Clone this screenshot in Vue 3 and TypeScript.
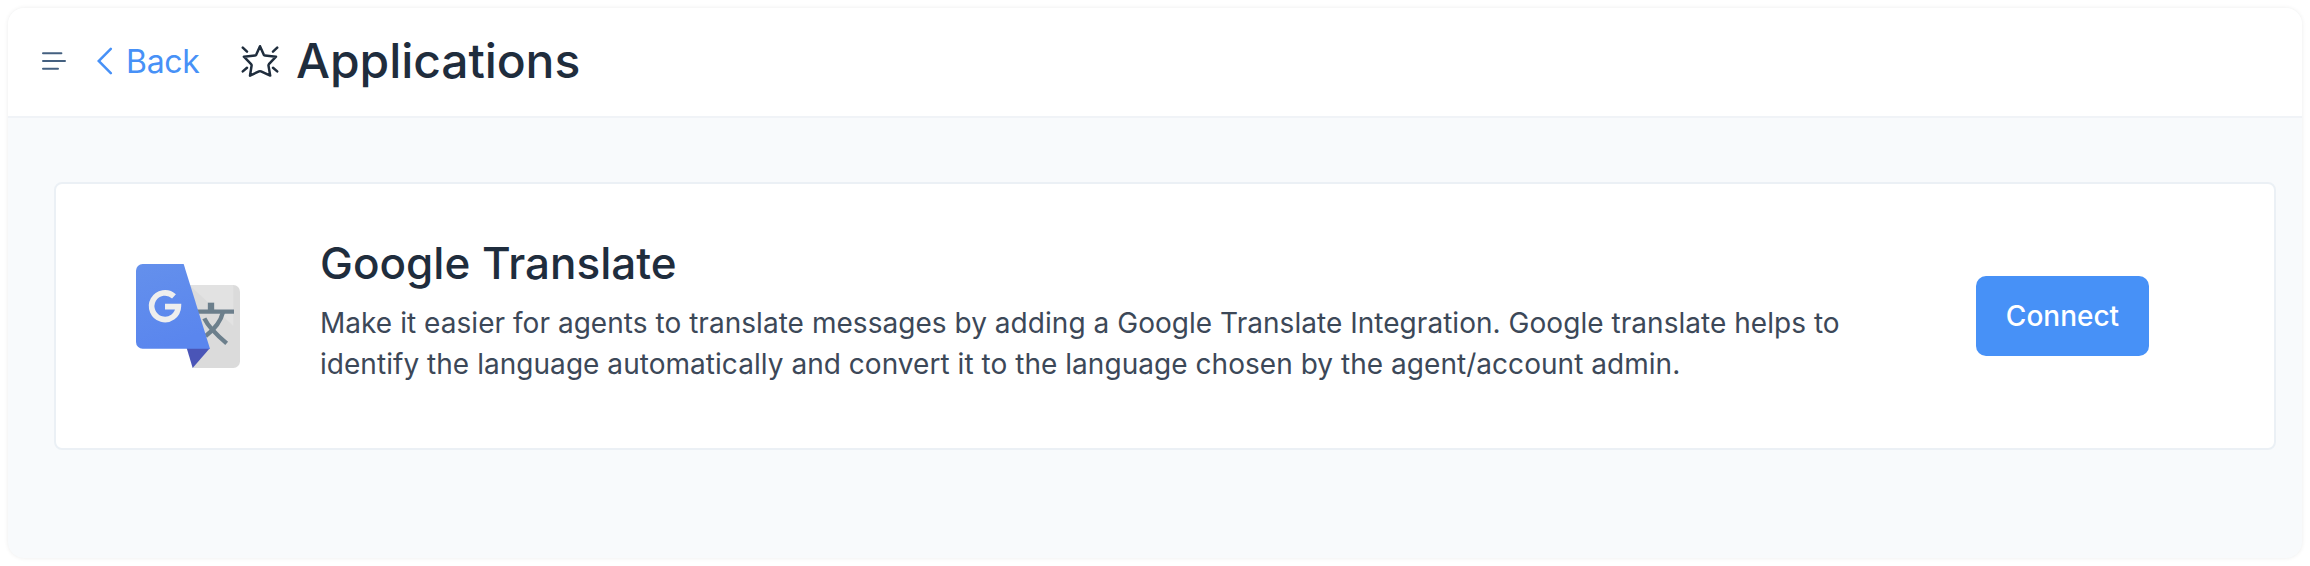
<script setup lang="ts">
interface Integration {
  name: string
  lines: string[]
  action: string
}

const title: string = 'Applications'
const integration: Integration = {
  name: 'Google Translate',
  lines: [
    'Make it easier for agents to translate messages by adding a Google Translate Integration. Google translate helps to',
    'identify the language automatically and convert it to the language chosen by the agent/account admin.',
  ],
  action: 'Connect',
}
</script>

<template>
  <div class="page">
    <main class="window">
      <header class="topbar">
        <svg class="menu" width="24" height="20" viewBox="0 0 24 20">
          <path d="M1 2.2H19.4M1 10H23M1 17.700H16" />
        </svg>
        <a class="back">
          <svg width="16" height="28" viewBox="0 0 16 28"><path d="M13.8 1.8 1.7 14 13.8 26.2" /></svg>
          <span>Back</span>
        </a>
        <svg class="star" width="38" height="34" viewBox="0 0 38 34">
          <path d="M19 2.2 22.7 10.6Q23.1 11.4 24 11.6L35 12.7 27.9 20.2Q27.4 20.8 27.5 21.6L29.2 31.6 20 27.4Q19 27 18 27.4L9 31.6 10.6 21.6Q10.7 20.8 10.1 20.2L2.9 12.7 14 11.6Q14.9 11.4 15.3 10.6Z" />
          <path d="M1.8 3.7 6 7.6M36.2 3.7 32 7.6M1.8 27.4 6 23.8M36.2 27.4 32 23.8" />
        </svg>
        <h1>{{ title }}</h1>
      </header>
      <section class="content">
        <article class="card">
          <svg class="logo" width="104" height="104" viewBox="0 0 312 312">
            <defs>
              <linearGradient id="blue" x1="0" y1="0" x2="0.3" y2="1">
                <stop offset="0" stop-color="#6490ec" />
                <stop offset="1" stop-color="#5a86ee" />
              </linearGradient>
            </defs>
            <path d="M150 63H292a20 20 0 0 1 20 20V292a20 20 0 0 1-20 20H170Z" fill="#dbdbdb" />
            <path d="M160 63 292 186V63Z" fill="#e2e2e2" />
            <g fill="none" stroke="#6c7f8c" stroke-width="13">
              <path d="M180 143H294" />
              <path d="M225 116V143" stroke-width="19" />
              <path d="M261 144Q252 183 209 216" />
              <path d="M205 163Q219 193 272 238" />
            </g>
            <path d="M152 252H222L170 312Z" fill="#4a55b7" />
            <path d="M20 0H143L222 254H20A20 20 0 0 1 0 234V20A20 20 0 0 1 20 0Z" fill="url(#blue)" />
            <path d="M114 97A40 40 0 1 0 127 128H87" fill="none" stroke="#eee" stroke-width="17" />
          </svg>
          <div class="info">
            <h2>{{ integration.name }}</h2>
            <p><span v-for="line in integration.lines" :key="line">{{ line }}</span></p>
          </div>
          <button class="connect" type="button">{{ integration.action }}</button>
        </article>
      </section>
    </main>
  </div>
</template>

<style>
body {
  background: #fff;
}
</style>

<style scoped>
* {
  box-sizing: border-box;
}
.page {
  height: 566px;
  padding: 8px;
  background: #fff;
  font-family: Inter, sans-serif;
}
.window {
  height: 550px;
  display: flex;
  flex-direction: column;
  border-radius: 16px;
  background: #f8fafc;
  box-shadow: 0 0 4px rgba(0, 0, 0, 0.08);
  overflow: hidden;
}
.topbar {
  height: 110px;
  flex: none;
  display: flex;
  align-items: center;
  padding-left: 34px;
  background: #fff;
  border-bottom: 2px solid #f0f3f7;
}
svg {
  flex: none;
  display: block;
}
.menu {
  margin-bottom: 2px;
  fill: none;
  stroke: #446080;
  stroke-width: 2;
  stroke-linecap: round;
}
.back {
  display: flex;
  align-items: center;
  gap: 13px;
  width: 144px;
  margin-left: 31px;
  color: #4791f7;
  font-size: 32px;
  letter-spacing: -0.3px;
  line-height: 40px;
  white-space: nowrap;
}
.back svg {
  margin-bottom: 2px;
  fill: none;
  stroke: currentColor;
  stroke-width: 2.5;
  stroke-linecap: round;
}
.star {
  margin-bottom: 2px;
  fill: none;
  stroke: #1f2d3d;
  stroke-width: 2.5;
  stroke-linecap: round;
  stroke-linejoin: round;
}
h1,
h2,
p {
  margin: 0;
  white-space: nowrap;
}
h1 {
  margin-left: 17px;
  margin-bottom: 3px;
  color: #1f2d3d;
  font-size: 48px;
  font-weight: 500;
  letter-spacing: -0.08px;
  line-height: 60px;
}
.content {
  flex: 1;
  padding: 64px 26px 0 46px;
}
.card {
  height: 268px;
  display: flex;
  align-items: center;
  padding: 0 125px 0 80px;
  background: #fff;
  border: 2px solid #ebf0f5;
  border-radius: 8px;
}
.info {
  margin-left: 80px;
  padding-bottom: 12px;
  flex: 1;
}
h2 {
  color: #1f2d3d;
  font-size: 44px;
  font-weight: 500;
  line-height: 56px;
}
p {
  margin-top: 12px;
  color: #3c4858;
  font-size: 28px;
  letter-spacing: 0.04px;
  line-height: 41px;
}
p span {
  display: block;
}
.connect {
  width: 173px;
  height: 80px;
  padding: 0;
  border: 0;
  border-radius: 10px;
  background: #4791f7;
  color: #fff;
  font-family: inherit;
  font-size: 28px;
  font-weight: 500;
}
</style>
